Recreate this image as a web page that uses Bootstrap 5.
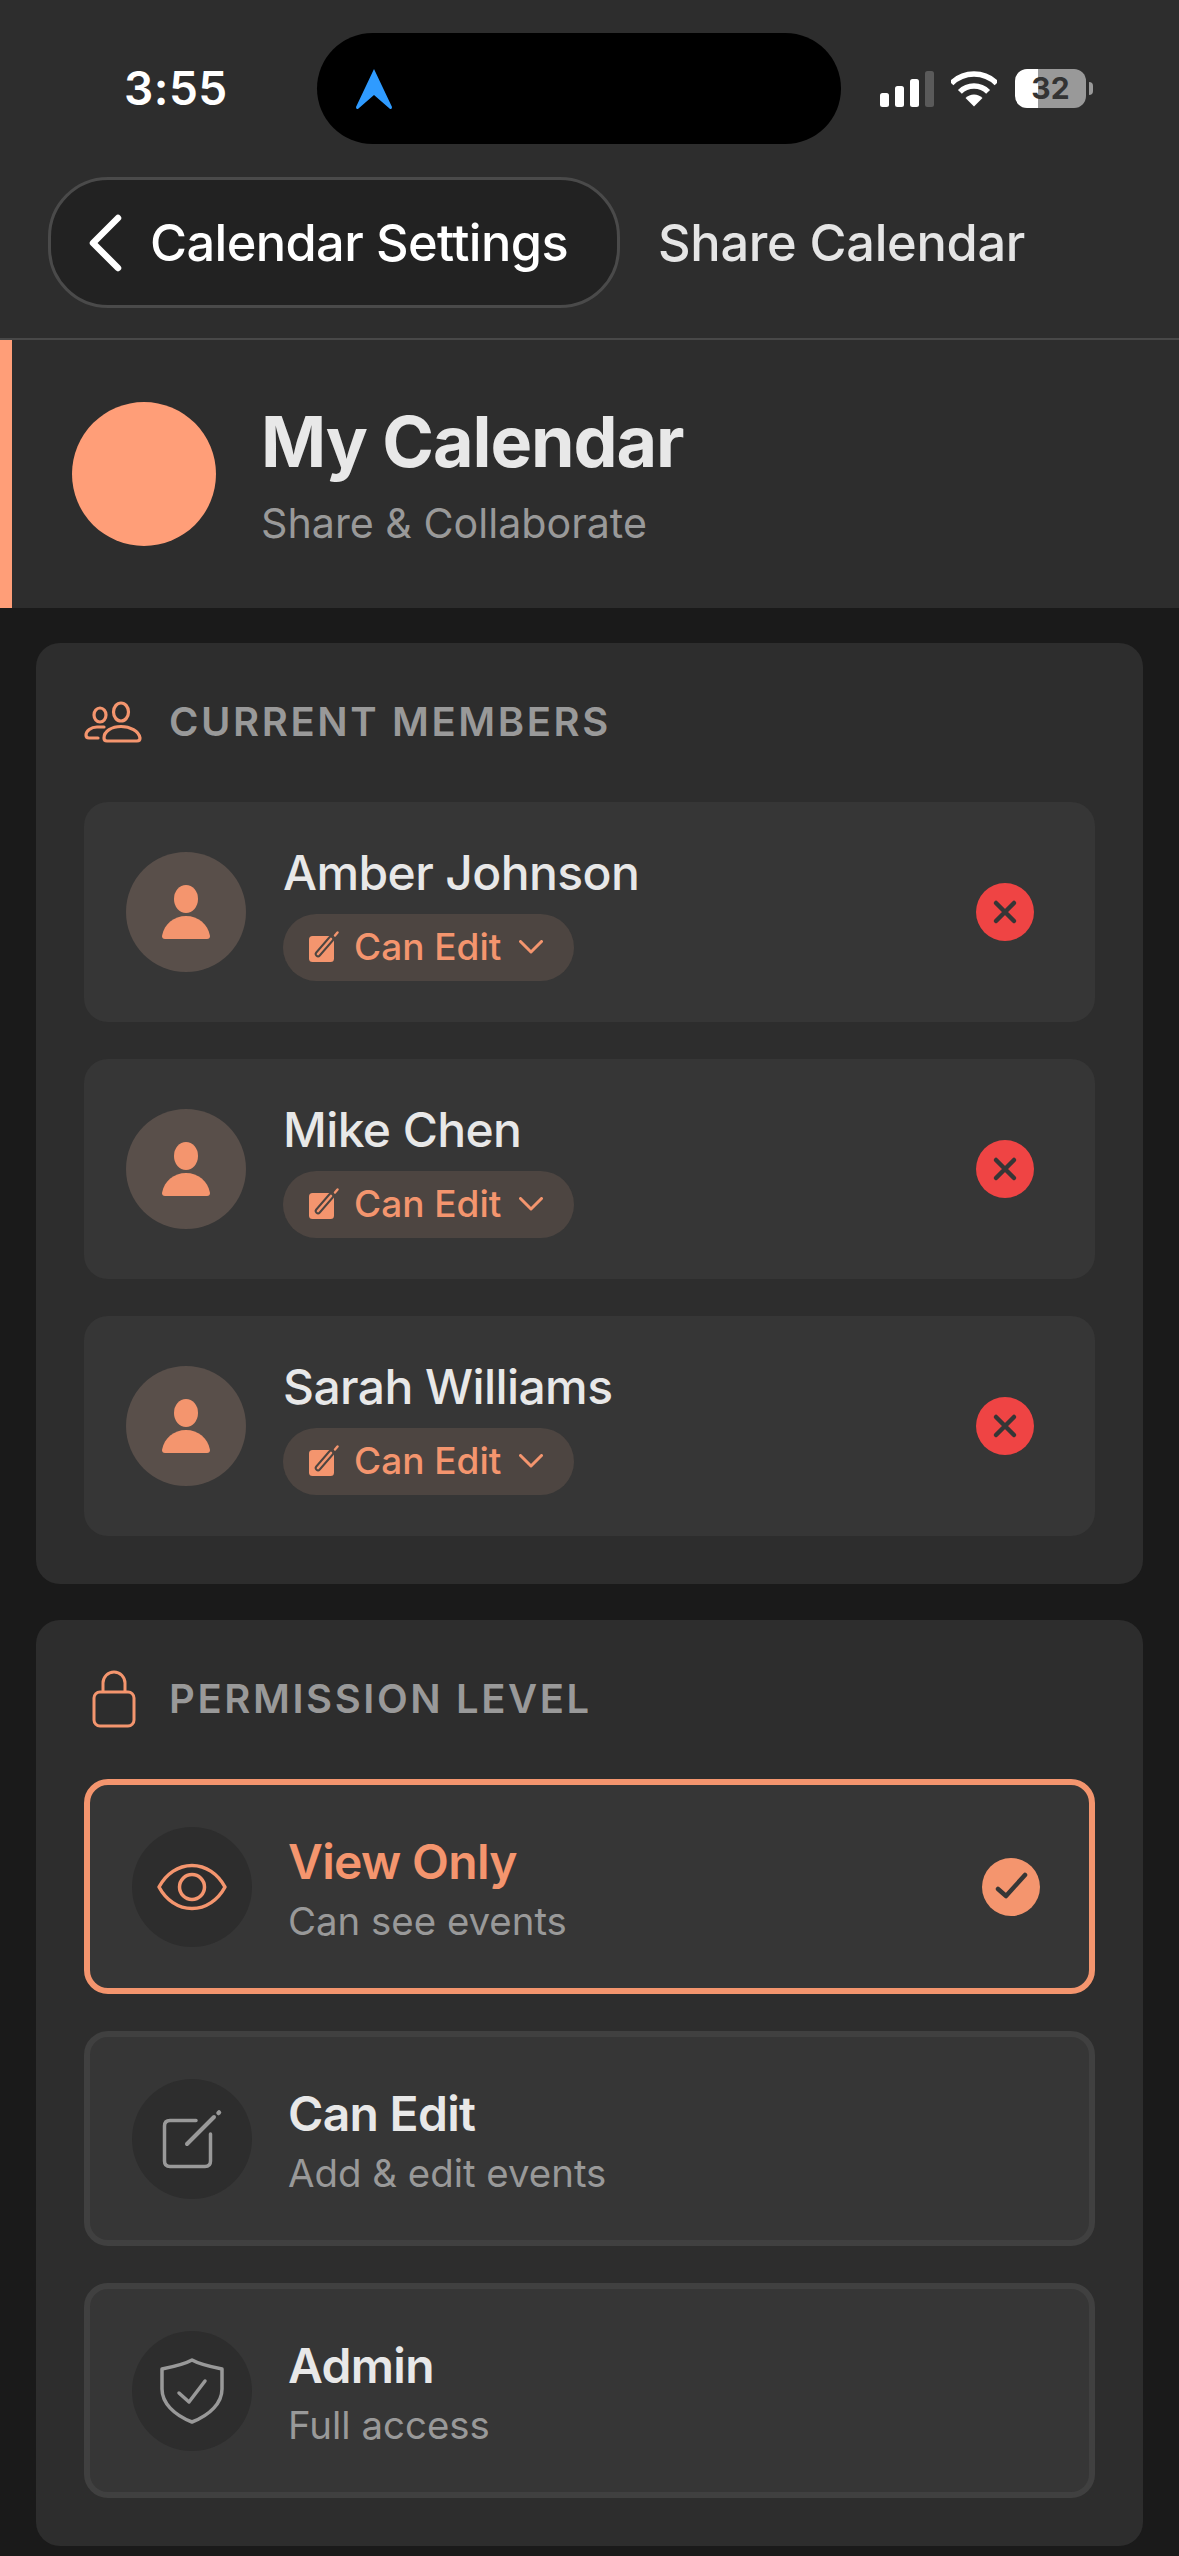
<!DOCTYPE html>
<html lang="en">
<head>
<meta charset="UTF-8" />
<meta name="viewport" content="width=device-width, initial-scale=1.0" />
<title>Share Calendar</title>
<link href="https://cdn.jsdelivr.net/npm/bootstrap@5.3.3/dist/css/bootstrap.min.css" rel="stylesheet" />
<style>
  body { background: #1a1a1a; font-family: Inter, "Noto Sans", sans-serif; color: #e5e5e5; }
  .top-area { background: #2d2d2d; height: 340px; border-bottom: 2px solid #484848; }
  .status-row { padding-top: 33px; height: 144px; }
  .clock { width: 317px; padding-left: 124px; font-size: 46px; font-weight: 600; color: #fff; line-height: 111px; letter-spacing: .5px; }
  .island { width: 524px; height: 111px; background: #000; border-radius: 56px; padding-left: 38px; }
  .status-icons { padding-left: 39px; gap: 17px; }
  .batt { width: 71px; height: 39px; border-radius: 12px; background: linear-gradient(90deg, #fff 32%, #999 32%); color: #333; font-size: 30px; font-weight: 700; line-height: 39px; text-align: center; }
  .batt-wrap { gap: 3px; margin-left: 1px; }
  .batt-tip { width: 4px; height: 13px; background: #999; border-radius: 0 7px 7px 0; }
  .nav-row { padding: 33px 0 0 48px; }
  .back-pill { width: 572px; height: 131px; background: #222; border: 3px solid #4a4a4a; border-radius: 60px; padding-left: 36px; gap: 27px; color: #fff; font-size: 50.5px; font-weight: 500; letter-spacing: -.6px; }
  .page-name { margin-left: 38px; font-size: 50.5px; font-weight: 500; letter-spacing: -.3px; color: #e5e5e5; }
  .hero { background: #2d2d2d; height: 268px; border-left: 12px solid #ff9e78; padding-left: 60px; gap: 45px; }
  .hero-dot { width: 144px; height: 144px; background: #ff9e78; }
  .hero-title { font-size: 70px; font-weight: 700; line-height: 84px; letter-spacing: -1.1px; color: #e8e8e8; }
  .hero-sub { font-size: 41.2px; line-height: 52px; margin-top: 13px; color: #999; }
  .page-body { padding: 35px 36px 0; gap: 36px; }
  .panel { background: #2d2d2d; border-radius: 24px; padding: 48px; }
  .panel-head { height: 62px; margin-bottom: 49px; font-size: 40px; font-weight: 600; letter-spacing: 2.6px; color: #999; }
  .panel-icon { width: 85px; }
  .member { height: 220px; background: #363636; border-radius: 24px; padding: 0 61px 0 42px; }
  .avatar { width: 120px; height: 120px; background: #594f4a; margin-right: 37px; }
  .member-name { font-size: 48px; font-weight: 500; line-height: 58px; letter-spacing: -.6px; color: #e8e8e8; margin-bottom: 12px; }
  .role-pill { height: 67px; background: #4d4541; padding: 0 31px 0 25px; gap: 14px; font-size: 37px; font-weight: 500; color: #f4956e; }
  .role-pill .drop { margin-left: 4px; }
  .round-btn { width: 58px; height: 58px; }
  .bg-remove { background: #ef4444; }
  .bg-picked { background: #f4956e; }
  .option { height: 215px; background: #363636; border: 6px solid #404040; border-radius: 24px; padding: 0 49px 0 42px; }
  .option.picked { border-color: #f4956e; }
  .option-icon { width: 120px; height: 120px; background: #2d2d2d; margin-right: 36px; }
  .option-text { padding-top: 5px; }
  .option-title { font-size: 48px; font-weight: 600; line-height: 58px; letter-spacing: -.7px; color: #e8e8e8; }
  .option.picked .option-title { color: #f4956e; }
  .option-sub { font-size: 38.4px; line-height: 50px; margin-top: 5px; color: #999; }
  .stack-37 { gap: 37px; }
</style>
</head>
<body>
  <svg width="0" height="0" class="position-absolute">
    <symbol id="i-person" viewBox="0 0 120 120">
      <ellipse cx="60" cy="47" rx="12" ry="14" fill="#f4956e" />
      <path d="M36 84C38 72 48 64 60 64S82 72 84 84Q84 87 81 87H39Q36 87 36 84Z" fill="#f4956e" />
    </symbol>
    <symbol id="i-edit-fill" viewBox="0 0 32 32">
      <rect x="1" y="5" width="25" height="26" rx="3.5" fill="#f4956e" />
      <path d="M10 23L23 8" stroke="#4d4541" stroke-width="6.5" stroke-linecap="round" fill="none" />
      <path d="M10 23L23 8" stroke="#f4956e" stroke-width="2.6" stroke-linecap="round" fill="none" />
      <path d="M27 4.5L29.5 1.5" stroke="#f4956e" stroke-width="2.4" stroke-linecap="round" fill="none" />
    </symbol>
    <symbol id="i-chev" viewBox="0 0 24 14">
      <path d="M1.5 1.5L12 12L22.5 1.5" stroke="#f4956e" stroke-width="3" stroke-linecap="round" stroke-linejoin="round" fill="none" />
    </symbol>
    <symbol id="i-x" viewBox="0 0 58 58">
      <path d="M20 20L38 38M38 20L20 38" stroke="#363636" stroke-width="4.5" stroke-linecap="round" fill="none" />
    </symbol>
  </svg>

  <!-- status bar + title row -->
  <header class="top-area">
    <div class="status-row d-flex align-items-start">
      <div class="clock">3:55</div>
      <div class="island d-flex align-items-center">
        <svg width="38" height="42" viewBox="0 0 38 42"><path d="M19 1L37 39Q37 42 34.500 40.500L19 27L3.500 40.500Q1 42 1 39Z" fill="#2f9bff" /></svg>
      </div>
      <div class="status-icons d-flex align-items-center" style="height:111px">
        <svg width="54" height="36" viewBox="0 0 54 36">
          <rect x="0" y="22" width="9" height="14" rx="2.500" fill="#fff" />
          <rect x="15" y="15" width="9" height="21" rx="2.500" fill="#fff" />
          <rect x="30" y="8" width="9" height="28" rx="2.500" fill="#fff" />
          <rect x="45" y="0" width="9" height="36" rx="2.500" fill="#5a5a5a" />
        </svg>
        <svg width="46" height="36" viewBox="0 0 46 36">
          <path d="M.4 12.400A32 32 0 0 1 45.600 12.400" stroke="#fff" stroke-width="5.500" fill="none" />
          <path d="M8.900 20.900A20 20 0 0 1 37.100 20.900" stroke="#fff" stroke-width="5.500" fill="none" />
          <path d="M23 35.500L14.500 27A12 12 0 0 1 31.500 27Z" fill="#fff" />
        </svg>
        <div class="batt-wrap d-flex align-items-center">
          <div class="batt">32</div>
          <div class="batt-tip"></div>
        </div>
      </div>
    </div>
    <div class="nav-row d-flex align-items-center">
      <a class="back-pill d-flex align-items-center text-decoration-none">
        <svg width="36" height="58" viewBox="0 0 36 58"><path d="M31 4L6 29L31 54" stroke="#fff" stroke-width="6.500" stroke-linecap="round" stroke-linejoin="round" fill="none" /></svg>
        <span>Calendar Settings</span>
      </a>
      <span class="page-name">Share Calendar</span>
    </div>
  </header>

  <section class="hero d-flex align-items-center">
    <div class="hero-dot rounded-circle"></div>
    <div>
      <div class="hero-title">My Calendar</div>
      <div class="hero-sub">Share &amp; Collaborate</div>
    </div>
  </section>

  <main class="page-body d-flex flex-column">
    <section class="panel">
      <div class="panel-head d-flex align-items-center">
        <div class="panel-icon">
          <svg class="d-block" width="58" height="42" viewBox="0 0 58 42" fill="none" stroke="#f4956e" stroke-width="3.200" stroke-linecap="round" stroke-linejoin="round">
            <ellipse cx="16" cy="14" rx="6" ry="7" />
            <ellipse cx="37" cy="11" rx="7.500" ry="9" />
            <path d="M20 26H13C7 26 2 30 2 34Q2 37 5 37H14" />
            <path d="M20 37C20 30 28 25.500 37 25.500S55 30 56 37Q56 40 53 40H23Q20 40 20 37Z" />
          </svg>
        </div>
        <span>CURRENT MEMBERS</span>
      </div>
      <div class="d-flex flex-column stack-37">
        <div class="member d-flex align-items-center">
          <div class="avatar rounded-circle flex-shrink-0"><svg class="d-block" width="120" height="120"><use href="#i-person" /></svg></div>
          <div class="flex-grow-1">
            <div class="member-name">Amber Johnson</div>
            <div class="role-pill d-inline-flex align-items-center rounded-pill">
              <svg width="32" height="32"><use href="#i-edit-fill" /></svg>
              <span>Can Edit</span>
              <svg class="drop" width="24" height="14"><use href="#i-chev" /></svg>
            </div>
          </div>
          <div class="round-btn bg-remove rounded-circle"><svg class="d-block" width="58" height="58"><use href="#i-x" /></svg></div>
        </div>
        <div class="member d-flex align-items-center">
          <div class="avatar rounded-circle flex-shrink-0"><svg class="d-block" width="120" height="120"><use href="#i-person" /></svg></div>
          <div class="flex-grow-1">
            <div class="member-name">Mike Chen</div>
            <div class="role-pill d-inline-flex align-items-center rounded-pill">
              <svg width="32" height="32"><use href="#i-edit-fill" /></svg>
              <span>Can Edit</span>
              <svg class="drop" width="24" height="14"><use href="#i-chev" /></svg>
            </div>
          </div>
          <div class="round-btn bg-remove rounded-circle"><svg class="d-block" width="58" height="58"><use href="#i-x" /></svg></div>
        </div>
        <div class="member d-flex align-items-center">
          <div class="avatar rounded-circle flex-shrink-0"><svg class="d-block" width="120" height="120"><use href="#i-person" /></svg></div>
          <div class="flex-grow-1">
            <div class="member-name">Sarah Williams</div>
            <div class="role-pill d-inline-flex align-items-center rounded-pill">
              <svg width="32" height="32"><use href="#i-edit-fill" /></svg>
              <span>Can Edit</span>
              <svg class="drop" width="24" height="14"><use href="#i-chev" /></svg>
            </div>
          </div>
          <div class="round-btn bg-remove rounded-circle"><svg class="d-block" width="58" height="58"><use href="#i-x" /></svg></div>
        </div>
      </div>
    </section>

    <section class="panel">
      <div class="panel-head d-flex align-items-center">
        <div class="panel-icon">
          <svg class="d-block ms-2" width="44" height="58" viewBox="0 0 44 58" fill="none" stroke="#f4956e" stroke-width="3">
            <rect x="2" y="22" width="40" height="34" rx="6" />
            <path d="M11 22V13A11 11 0 0 1 33 13V22" />
          </svg>
        </div>
        <span>PERMISSION LEVEL</span>
      </div>
      <div class="d-flex flex-column stack-37">
        <div class="option picked d-flex align-items-center">
          <div class="option-icon rounded-circle flex-shrink-0">
            <svg class="d-block" width="120" height="120" viewBox="0 0 120 120" fill="none" stroke="#f4956e" stroke-width="3.500">
              <path d="M27 60C34 47 46 38.500 60 38.500S86 47 93 60C86 73 74 81.500 60 81.500S34 73 27 60Z" stroke-linejoin="round" />
              <circle cx="60" cy="60" r="12.500" />
            </svg>
          </div>
          <div class="option-text flex-grow-1">
            <div class="option-title">View Only</div>
            <div class="option-sub">Can see events</div>
          </div>
          <div class="round-btn bg-picked rounded-circle">
            <svg class="d-block" width="58" height="58" viewBox="0 0 58 58"><path d="M16 31L24 38L43 17" stroke="#363636" stroke-width="4.500" stroke-linecap="round" stroke-linejoin="round" fill="none" /></svg>
          </div>
        </div>
        <div class="option d-flex align-items-center">
          <div class="option-icon rounded-circle flex-shrink-0">
            <svg class="d-block" width="120" height="120" viewBox="0 0 120 120" fill="none" stroke="#999" stroke-width="3.500" stroke-linecap="round" stroke-linejoin="round">
              <path d="M64 41.500H38Q32.500 41.500 32.500 47V82Q32.500 87.500 38 87.500H73Q78.500 87.500 78.500 82V55" />
              <path d="M55 65L82 38" stroke-width="4" />
              <path d="M86.500 34L87 33.500" stroke-width="4.500" />
            </svg>
          </div>
          <div class="option-text flex-grow-1">
            <div class="option-title">Can Edit</div>
            <div class="option-sub">Add &amp; edit events</div>
          </div>
        </div>
        <div class="option d-flex align-items-center">
          <div class="option-icon rounded-circle flex-shrink-0">
            <svg class="d-block" width="120" height="120" viewBox="0 0 120 120" fill="none" stroke="#999" stroke-width="3.500" stroke-linecap="round" stroke-linejoin="round">
              <path d="M60 29C67 33 80 36 90 38V58C90 72 78 84 60 91C42 84 30 72 30 58V38C40 36 53 33 60 29Z" />
              <path d="M47 62L57 71L73 50" />
            </svg>
          </div>
          <div class="option-text flex-grow-1">
            <div class="option-title">Admin</div>
            <div class="option-sub">Full access</div>
          </div>
        </div>
      </div>
    </section>
  </main>

  <script src="https://cdn.jsdelivr.net/npm/bootstrap@5.3.3/dist/js/bootstrap.bundle.min.js"></script>
</body>
</html>
